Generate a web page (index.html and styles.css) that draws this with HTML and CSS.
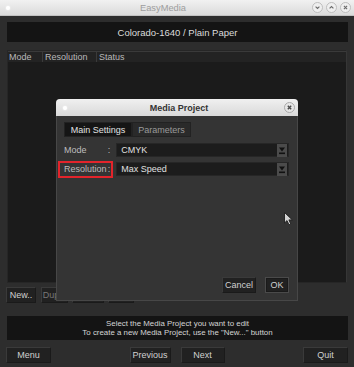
FILE: index.html
```html
<!DOCTYPE html>
<html lang="en">
<head>
	<meta charset="UTF-8">
	<title>EasyMedia</title>
	<link rel="stylesheet" href="styles.css">
</head>
<body>
	<div class="win">
		<div class="titlebar">
			<span class="menu-dot"></span>
			<span class="title">EasyMedia</span>
			<span class="wbtns">
				<svg width="11" height="11" viewBox="0 0 11 11"><circle cx="5.5" cy="5.5" r="5" fill="#efefef" stroke="#bdbdbd"/><path d="M3.6 4.6 L5.5 6.5 L7.4 4.6" fill="none" stroke="#6a6a6a" stroke-width="1.1"/></svg>
				<svg width="11" height="11" viewBox="0 0 11 11"><circle cx="5.5" cy="5.5" r="5" fill="#efefef" stroke="#bdbdbd"/><path d="M3.6 6.4 L5.5 4.5 L7.4 6.4" fill="none" stroke="#6a6a6a" stroke-width="1.1"/></svg>
				<svg width="11" height="11" viewBox="0 0 11 11"><circle cx="5.5" cy="5.5" r="5" fill="#efefef" stroke="#bdbdbd"/><path d="M3.9 3.9 L7.1 7.1 M7.1 3.9 L3.9 7.1" fill="none" stroke="#6a6a6a" stroke-width="1.1"/></svg>
			</span>
		</div>
		<div class="main">
			<div class="header">Colorado-1640 / Plain Paper</div>
			<div class="list">
				<div class="list-head">
					<span class="col col-mode">Mode</span>
					<span class="col col-res">Resolution</span>
					<span class="col col-status">Status</span>
				</div>
			</div>
			<div class="tools">
				<button class="btn w30">New..</button>
				<button class="btn w27 off">Dupl..</button>
				<button class="btn w32 off">Delete</button>
				<button class="btn w26 off">Edit</button>
			</div>
			<div class="message">
				Select the Media Project you want to edit<br>
				To create a new Media Project, use the "New..." button
			</div>
			<div class="nav">
				<button class="btn w45">Menu</button>
				<div class="nav-mid">
					<button class="btn w41">Previous</button>
					<button class="btn w44">Next</button>
				</div>
				<button class="btn w45">Quit</button>
			</div>
		</div>

		<div class="dialog">
			<div class="dlg-title">
				<span class="menu-dot"></span>
				<span class="dlg-name">Media Project</span>
				<svg class="dlg-close" width="11" height="11" viewBox="0 0 11 11"><circle cx="5.5" cy="5.5" r="5" fill="#e6e6e6" stroke="#a9a9a9"/><path d="M3.8 3.8 L7.2 7.2 M7.2 3.8 L3.8 7.2" fill="none" stroke="#4a4a4a" stroke-width="1.4"/></svg>
			</div>
			<div class="dlg-body">
				<div class="tabs">
					<span class="tab active">Main Settings</span>
					<span class="tab">Parameters</span>
				</div>
				<div class="row">
					<span class="label"><span>Mode</span><span>:</span></span>
					<span class="combo"><span>CMYK</span>
						<svg width="10" height="13" viewBox="0 0 10 13"><rect width="10" height="13" fill="#4b4b4b"/><path d="M2 3.5 L8 3.5 L5 7.5 Z" fill="#111"/><rect x="2" y="8.5" width="6" height="1.6" fill="#111"/></svg>
					</span>
				</div>
				<div class="row">
					<span class="label marked"><span>Resolution</span><span>:</span></span>
					<span class="combo"><span>Max Speed</span>
						<svg width="10" height="13" viewBox="0 0 10 13"><rect width="10" height="13" fill="#4b4b4b"/><path d="M2 3.5 L8 3.5 L5 7.5 Z" fill="#111"/><rect x="2" y="8.5" width="6" height="1.6" fill="#111"/></svg>
					</span>
				</div>
				<div class="dlg-btns">
					<button class="btn w34">Cancel</button>
					<button class="btn w24 default">OK</button>
				</div>
			</div>
		</div>

		<svg class="cursor" width="10" height="14" viewBox="0 0 10 14"><path d="M0.5 0.5 L0.5 11 L3 8.6 L5 12.8 L6.8 12 L4.9 7.9 L8.3 7.9 Z" fill="#d4d4d4" stroke="#1e1e1e" stroke-width="0.9"/></svg>
	</div>
</body>
</html>
```

FILE: styles.css
```css
*{
	margin: 0;
	padding: 0;
	box-sizing: border-box;
}
body{
	width: 354px;
	height: 367px;
	overflow: hidden;
	background-color: #2d2d2d;
	font-family: "Liberation Sans", Arial, sans-serif;
	font-size: 9px;
	color: #cfcfcf;
}
.win{
	position: relative;
	width: 354px;
	height: 367px;
	display: flex;
	flex-direction: column;
}
.titlebar{
	height: 16px;
	display: flex;
	align-items: center;
	padding: 0 3px 0 6px;
	background: linear-gradient(#f1f1f1, #dbdbdb);
	border-bottom: 1px solid #c2c2c2;
}
.menu-dot{
	display: block;
	width: 4px;
	height: 4px;
	border-radius: 2px;
	background-color: #fff;
	box-shadow: 0 0 2px #fff;
}
.title{
	flex: 1;
	text-align: center;
	padding-left: 4px;
	color: #9d9d9d;
	font-size: 9.3px;
}
.wbtns{
	display: flex;
	gap: 3px;
}
.wbtns svg{
	display: block;
}
.main{
	flex: 1;
	display: flex;
	flex-direction: column;
	padding: 0 6px;
}
.header{
	margin: 6px 0 0 1px;
	height: 20px;
	display: flex;
	align-items: center;
	justify-content: center;
	background-color: #141414;
	color: #dcdcdc;
	font-size: 9.5px;
}
.list{
	margin: 8px 1px 0 1px;
	height: 233px;
	background-color: #1b1b1b;
	border: 1px solid #262626;
	border-right-color: #363636;
}
.list-head{
	display: flex;
	height: 11px;
	background-color: #232323;
	border-top: 1px solid #3a3a3a;
	color: #b9b9b9;
	line-height: 10px;
}
.col{
	padding-left: 1px;
	border-right: 1px solid #3a3a3a;
}
.col-mode{
	width: 35px;
}
.col-res{
	width: 54px;
	padding-left: 2px;
}
.col-status{
	flex: 1;
	padding-left: 2px;
	border-right: 0;
}
.btn{
	height: 16px;
	display: flex;
	align-items: center;
	justify-content: center;
	background-color: #212121;
	border: 1px solid #3a3a3a;
	border-right-color: #1a1a1a;
	border-bottom-color: #1a1a1a;
	color: #d0d0d0;
	font-family: inherit;
	font-size: 9px;
}
.btn.off{
	color: #777;
}
.w24{ width: 24px; }
.w26{ width: 26px; }
.w27{ width: 27px; }
.w30{ width: 30px; }
.w32{ width: 32px; }
.w34{ width: 34px; }
.w41{ width: 41px; }
.w44{ width: 44px; }
.w45{ width: 45px; }
.tools{
	margin-top: 4px;
	display: flex;
	gap: 4px;
}
.tools .w30{
	margin-right: 1px;
}
.message{
	margin: 13px 0 0 1px;
	height: 24px;
	display: flex;
	flex-direction: column;
	justify-content: center;
	background-color: #141414;
	text-align: center;
	color: #d4d4d4;
	font-size: 7.9px;
	line-height: 9px;
}
.nav{
	margin-top: 7px;
	display: flex;
	justify-content: space-between;
}
.nav-mid{
	display: flex;
	gap: 10px;
}

/* dialog over the main window */
.dialog{
	position: absolute;
	left: 56px;
	top: 99px;
	width: 242px;
	height: 202px;
	display: flex;
	flex-direction: column;
	background-color: #343434;
	border: 1px solid #474747;
	border-top: 0;
	border-radius: 4px 4px 0 0;
}
.dlg-title{
	height: 17px;
	display: grid;
	grid-template-columns: 1fr auto 1fr;
	align-items: center;
	padding: 0 3px 0 7px;
	margin: 0 -1px;
	background: linear-gradient(#f0f0f0, #d9d9d9);
	border-radius: 4px 4px 0 0;
}
.dlg-name{
	color: #333;
	font-weight: bold;
	font-size: 9px;
}
.dlg-close{
	display: block;
	justify-self: end;
}
.dlg-body{
	flex: 1;
	display: flex;
	flex-direction: column;
	padding: 6px 8px 7px 1px;
}
.tabs{
	display: flex;
	height: 15px;
	margin-left: 6px;
}
.tab{
	width: 59px;
	display: flex;
	align-items: center;
	justify-content: center;
	background-color: #2a2a2a;
	border: 1px solid #222;
	color: #9a9a9a;
}
.tab.active{
	width: 68px;
	background-color: #151515;
	color: #e2e2e2;
}
.row{
	margin-top: 5px;
	height: 16px;
	display: flex;
	align-items: center;
}
.row + .row{
	margin-top: 3px;
}
.label{
	width: 56px;
	height: 17px;
	display: flex;
	align-items: center;
	justify-content: space-between;
	padding: 0 1px 0 4px;
	border: 2px solid transparent;
	color: #bdbdbd;
}
.label.marked{
	border-color: #e3242b;
}
.combo{
	margin-left: 3px;
	width: 175px;
	height: 14px;
	display: flex;
	align-items: center;
	justify-content: space-between;
	padding: 0 1px 0 4px;
	background-color: #1c1c1c;
	border: 1px solid #262626;
	color: #e0e0e0;
}
.combo svg{
	display: block;
}
.dlg-btns{
	margin-top: auto;
	display: flex;
	justify-content: flex-end;
	gap: 9px;
}
.btn.default{
	border-color: #4a4a4a;
	box-shadow: inset 0 0 0 1px #1a1a1a;
}
.cursor{
	position: absolute;
	left: 284px;
	top: 212px;
}
```
